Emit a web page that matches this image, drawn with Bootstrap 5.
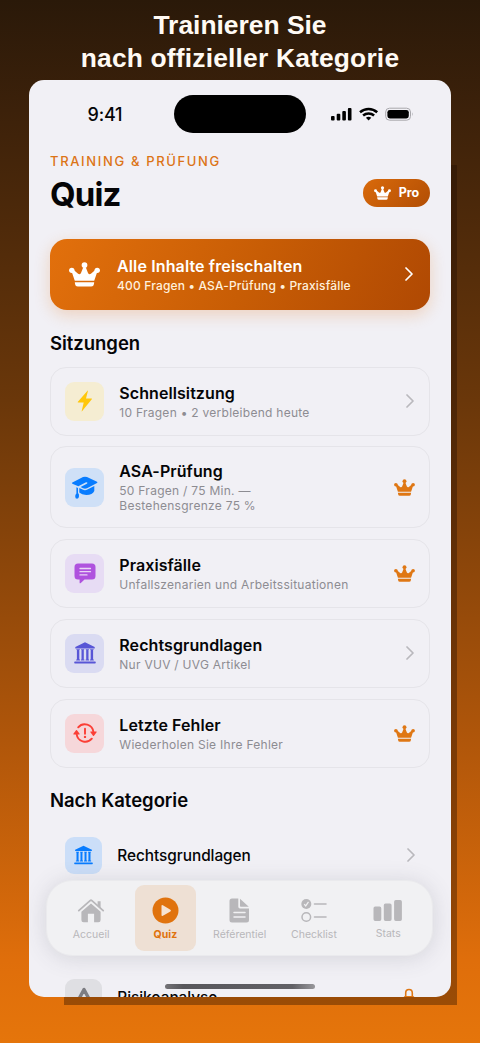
<!DOCTYPE html>
<html lang="de">
<head>
<meta charset="utf-8">
<meta name="viewport" content="width=device-width, initial-scale=1">
<title>Quiz</title>
<link href="https://cdn.jsdelivr.net/npm/bootstrap@5.3.0/dist/css/bootstrap.min.css" rel="stylesheet">
<style>
body{font-family:Inter,"Liberation Sans",sans-serif;height:1043px;overflow:hidden;color:#050507;background:linear-gradient(#2a1909 0,#3c210a 110px,#6a370a 400px,#b0560a 740px,#df6e0b 960px,#e5750b 1043px)}
.headline{font:700 26.4px/33px "Liberation Sans",Arial,sans-serif;height:80px;padding-top:9px;color:#fffaf4}
.headline span{letter-spacing:.18px}
.device{width:422px;height:917px;margin-left:29px}
.device::before{content:"";position:absolute;left:35px;right:-6px;top:85px;bottom:-8px;background:rgba(30,10,0,.37);filter:blur(.6px)}
.screen{height:917px;background:#f1f0f5;border-radius:15px;padding:0 21px}
.statusbar{height:68px}
.clock{font-size:18px;font-weight:500;letter-spacing:-.2px;width:124px;padding-left:37.500px}
.island{width:132px;height:38px;border-radius:19px;background:#000}
.eyebrow{font-size:13px;font-weight:500;line-height:16px;letter-spacing:1.65px;color:#dc7416;padding-top:5px}
.title{font-size:33px;font-weight:700;line-height:40px;letter-spacing:-.9px;padding-top:1px}
.pro{width:67px;height:28px;font-size:12.5px;font-weight:700;background:linear-gradient(135deg,#d96a0b,#b24e04);margin-bottom:7px}
.banner{height:71px;margin-top:24.500px;border-radius:17px;padding:0 17px 0 19px;background:linear-gradient(115deg,#e2700c,#c85d05 52%,#b04903);box-shadow:0 5px 16px rgba(226,112,20,.24)}
.banner-text{margin-left:17px;padding-top:2px}
.banner h2{font-size:16px;font-weight:600;line-height:20px;margin:0;letter-spacing:.13px}
.banner p{font-size:12px;line-height:19px;margin:0;color:#fff0dc;font-weight:500;letter-spacing:.17px}
.section-title{font-size:18.5px;font-weight:600;line-height:24px;margin:0;letter-spacing:-.03px}
.session{height:69px;border:1px solid #e5e4e9;border-radius:16px;padding:0 14px}
.session.tall{height:82px}
.session h3{font-size:16px;font-weight:600;line-height:20px;margin:0;letter-spacing:.08px}
.session p{font-size:12px;line-height:15px;margin:2px 0 0;color:#8d8c92;letter-spacing:.27px}
.tile{width:39px;height:39px;border-radius:9px;margin-right:15.300px}
.tile.compact{width:37px;height:37px}
.category{height:37px;padding:0 14px 0 15px;font-size:15.400px;font-weight:500;letter-spacing:-.05px}
.chev{margin-right:1px}
.tabs{left:17px;top:800px;width:387px;height:76px;border-radius:26px;background:#f1f1f3;border:1px solid #eaeaed;box-shadow:0 2px 22px rgba(70,70,90,.17);padding:4px 6px 4px 7px}
.tab{color:#b8b7ba;font-size:10.5px;line-height:14px;width:74.3px;height:66px;padding-top:11.500px;gap:4px}
.tab.active-tab{color:#e0730e;font-weight:700;background:#eee0d4;border-radius:9px;width:61px;margin:0 6.6px}
.indicator{left:136px;top:903.5px;width:150px;height:5.5px;border-radius:3px;background:linear-gradient(90deg,#747377,#58575c 12%,#626166 85%,#98979b)}
</style>
</head>
<body>
<svg width="0" height="0" class="position-absolute">
<symbol id="crown" viewBox="0 0 30 24"><g fill="currentColor"><circle cx="2.700" cy="8" r="2.600"/><circle cx="27.300" cy="8" r="2.600"/><circle cx="15" cy="2.900" r="2.800"/><path d="M5.600 18 2.700 9.500 4.600 7.700 8.800 11.200Q10.500 12.400 11.600 10.500L13.800 5H16.200L18.400 10.500Q19.500 12.400 21.200 11.200L25.400 7.700 27.300 9.500 24.400 18zM5.600 19.600h18.800l-.3 1.900q-.3 2.200-2.500 2.200H8.400q-2.200 0-2.500-2.200z"/></g></symbol>
<symbol id="chevron" viewBox="0 0 8 14"><path d="m1 1 6 6-6 6" fill="none" stroke="currentColor" stroke-width="1.7" stroke-linecap="round" stroke-linejoin="round"/></symbol>
<symbol id="court" viewBox="0 0 22 22"><path d="M11 .2 20.7 5v1.5H1.300V5zM2.400 7.300h3.400v.8h-.5v9.300h.7v1H2.200v-1h.7V8.100h-.5zm4.700 0h3.100v.8h-.4v9.300h.6v1H6.900v-1h.6V8.100h-.4zm4.700 0h3.100v.8h-.4v9.300h.6v1h-3.500v-1h.6V8.100h-.4zm4.400 0h3.400v.8h-.5v9.300h.7v1H16v-1h.7V8.100h-.5zM1 19.600h20q.8 0 .8 1T21 21.600H1q-.8 0-.8-1t.8-1z" fill="currentColor"/></symbol>
</svg>
<h1 class="headline text-center m-0">Trainieren Sie<br><span>nach offizieller Kategorie</span></h1>
<main class="device position-relative">
<div class="screen position-relative overflow-hidden">
  <div class="statusbar d-flex align-items-center">
    <div class="clock">9:41</div>
    <div class="island"></div>
    <svg class="ms-auto me-3" width="84" height="16" viewBox="0 0 84 16">
      <g fill="#000"><rect x="1" y="10" width="3.600" height="4.500" rx="1"/><rect x="6.700" y="7.700" width="3.600" height="6.800" rx="1"/><rect x="12.300" y="4.900" width="3.600" height="9.600" rx="1"/><rect x="17.900" y="2" width="3.600" height="12.500" rx="1"/></g>
      <g fill="none" stroke="#000" stroke-width="2.500"><path d="M30 6.200c5-4.400 12.200-4.400 17.200 0M33.100 9.500c3.200-2.800 7.800-2.800 11 0"/></g><path d="m38.600 14.600-2.700-2.800q2.700-2 5.400 0z"/>
      <rect x="55.700" y="2.200" width="24.800" height="12" rx="3.800" fill="none" stroke="#a8a7ac"/><rect x="57.400" y="3.900" width="21.400" height="8.600" rx="2.400"/><path d="M82 6.200q1.600 2 0 4z" fill="#a8a7ac"/>
    </svg>
  </div>
  <div class="d-flex justify-content-between align-items-end">
    <div><div class="eyebrow">TRAINING &amp; PRÜFUNG</div><div class="title mt-1">Quiz</div></div>
    <div class="pro rounded-pill text-white d-flex align-items-center justify-content-center gap-2"><svg width="17" height="14"><use href="#crown"/></svg>Pro</div>
  </div>
  <div class="banner text-white d-flex align-items-center">
    <svg width="31" height="25"><use href="#crown"/></svg>
    <div class="banner-text"><h2>Alle Inhalte freischalten</h2><p>400 Fragen • ASA-Prüfung • Praxisfälle</p></div>
    <svg class="ms-auto" width="8" height="14"><use href="#chevron"/></svg>
  </div>
  <h2 class="section-title" style="margin-top:21px">Sitzungen</h2>
  <div class="d-flex flex-column" style="gap:10.800px;margin-top:12px">
    <div class="session d-flex align-items-center"><div class="tile d-flex align-items-center justify-content-center" style="background:#f5edd2"><svg width="16" height="22" viewBox="0 0 16 22"><path d="M10.500.7q.7-.7.400.4L9 8.600h5.500q.8 0 .3.700L5.200 21.100q-.7.700-.5-.2L6.700 12.500H1.200q-.9 0-.3-.7z" fill="#ffc70b"/></svg></div><div><h3>Schnellsitzung</h3><p>10 Fragen • 2 verbleibend heute</p></div><svg class="chev ms-auto" style="color:#b9b8bd" width="8" height="14"><use href="#chevron"/></svg></div>
    <div class="session tall d-flex align-items-center"><div class="tile d-flex align-items-center justify-content-center" style="background:#cfe0f7"><svg width="27" height="24" viewBox="0 0 27 24" fill="#087cff"><path d="M1.400 7.600 12 2.100q2-.9 4 0L26 6.700q1 .7 0 1.300L16 13.200q-2 .9-4 0L9.600 12l6.300-3.200q1-.7.300-1.300-.6-.6-1.700-.1L7.300 11.200 1.400 8.800q-1-.6 0-1.200z"/><path d="m8.300 12.900 3.300 1.700q2.400 1.100 4.800 0l6.900-3.700v5q-1.800 4-8 4-4.600 0-7-2.400zM5.400 12.300l1.600.8v5q1.200.9 1 3.200-.1 2.400-1.900 2.500-2 0-1.900-2.500 0-1.900 1.200-2.900z"/></svg></div><div><h3>ASA-Prüfung</h3><p>50 Fragen / 75 Min. —<br>Bestehensgrenze 75 %</p></div><svg class="ms-auto" style="color:#df7714" width="21" height="17"><use href="#crown"/></svg></div>
    <div class="session d-flex align-items-center"><div class="tile d-flex align-items-center justify-content-center" style="background:#e7dcf4"><svg width="22" height="21" viewBox="0 0 22 21"><path d="M4 .5h14q3.500 0 3.500 3.500v9q0 3.500-3.500 3.500h-7.500L6.800 20q-1.200.9-1.200-.6v-2.900H4Q.5 16.500.5 13V4Q.5.500 4 .5" fill="#af52de"/><path d="M6 5.500h10.500M6 8.700h10.500M6 11.900h7" stroke="#e9d6f6" stroke-width="1.300" stroke-linecap="round"/></svg></div><div><h3>Praxisfälle</h3><p>Unfallszenarien und Arbeitssituationen</p></div><svg class="ms-auto" style="color:#df7714" width="21" height="17"><use href="#crown"/></svg></div>
    <div class="session d-flex align-items-center"><div class="tile d-flex align-items-center justify-content-center" style="background:#dadbf2"><svg style="color:#5856d6" width="22" height="22"><use href="#court"/></svg></div><div><h3>Rechtsgrundlagen</h3><p>Nur VUV / UVG Artikel</p></div><svg class="chev ms-auto" style="color:#b9b8bd" width="8" height="14"><use href="#chevron"/></svg></div>
    <div class="session d-flex align-items-center"><div class="tile d-flex align-items-center justify-content-center" style="background:#f6d7da"><svg width="24" height="22" viewBox="0 0 24 22"><path d="M5.200 5.300A8.700 8.700 0 0 1 20.400 10M18.800 16.700A8.700 8.700 0 0 1 3.600 12" fill="none" stroke="#fb3f36" stroke-width="1.900" stroke-linecap="round"/><path d="M17.700 9.600h5.600q.7 0 .3.600l-2.600 3.500q-.5.600-1 0l-2.600-3.500q-.4-.6.300-.6M.7 12.400h5.600q.7 0 .3-.6L4 8.300q-.5-.6-1 0L.4 11.800q-.4.600.3.600" fill="#fb3f36"/><path d="M12 6.700v5" stroke="#fb3f36" stroke-width="1.900" stroke-linecap="round"/><circle cx="12" cy="14.900" r="1.200" fill="#fb3f36"/></svg></div><div><h3>Letzte Fehler</h3><p>Wiederholen Sie Ihre Fehler</p></div><svg class="ms-auto" style="color:#df7714" width="21" height="17"><use href="#crown"/></svg></div>
  </div>
  <h2 class="section-title" style="margin-top:20px">Nach Kategorie</h2>
  <div class="d-flex flex-column" style="gap:105px;margin-top:25px">
    <div class="category d-flex align-items-center"><div class="tile compact d-flex align-items-center justify-content-center" style="background:#cbdef8"><svg style="color:#087cff" width="19" height="20"><use href="#court"/></svg></div>Rechtsgrundlagen<svg class="chev ms-auto" style="color:#b9b8bd" width="8" height="14"><use href="#chevron"/></svg></div>
    <div class="category d-flex align-items-center"><div class="tile compact d-flex align-items-center justify-content-center" style="background:#dfdfe3"><svg width="22" height="20" viewBox="0 0 22 20"><path d="m11 2.500-8 15h16z" fill="none" stroke="#7d7d82" stroke-width="3.400" stroke-linejoin="round"/></svg></div>Risikoanalyse<svg class="ms-auto" width="14" height="18" viewBox="0 0 14 18"><path d="M3.700 9V5q0-3.500 3.300-3.500T10.300 5v4" fill="none" stroke="#df7714" stroke-width="1.600"/><rect x="1.500" y="8" width="11" height="9" rx="2" fill="#df7714"/></svg></div>
  </div>
</div>
<nav class="tabs position-absolute d-flex">
  <div class="tab d-flex flex-column align-items-center"><svg width="28" height="27" viewBox="0 0 28 27"><path d="m1.800 13.600 11.300-10q.9-.7 1.800 0l11.300 10" fill="none" stroke="currentColor" stroke-width="1.800" stroke-linecap="round"/><path d="m14 6.400 9.600 8.400V23q0 2.200-2.200 2.200h-4.300v-8.500h-6.200v8.500H6.600q-2.200 0-2.200-2.200v-8.200zM20.600 4.200h3v7l-3-2.700z" fill="currentColor"/></svg>Accueil</div>
  <div class="tab active-tab d-flex flex-column align-items-center"><svg width="27" height="27" viewBox="0 0 27 27"><circle cx="13.500" cy="13.500" r="13" fill="#e0730e"/><path d="M9.500 9v9q0 1.500 1.400.8l7.500-4.400q1.100-.8 0-1.700l-7.500-4.400Q9.500 7.500 9.500 9" fill="#f6e3d3"/></svg>Quiz</div>
  <div class="tab d-flex flex-column align-items-center"><svg width="21" height="27" viewBox="0 0 21 27"><path d="M3 1.500h6.300v8.200q0 1.700 1.700 1.700h9V23q0 2.500-2.500 2.500H3Q.5 25.500.5 23V4Q.5 1.500 3 1.500M11 1.800l8.800 8H11.800q-.8 0-.8-.8z" fill="currentColor"/><path d="M5 15.500h11M5 20h11" stroke="#f1f1f3" stroke-width="1.500" stroke-linecap="round"/></svg>Référentiel</div>
  <div class="tab d-flex flex-column align-items-center"><svg width="26" height="27" viewBox="0 0 26 27"><circle cx="5.300" cy="7" r="5" fill="currentColor"/><path d="m3.200 7.100 1.500 1.800 2.800-4" fill="none" stroke="#f1f1f3" stroke-width="1.200"/><circle cx="5.300" cy="20" r="4.300" fill="none" stroke="currentColor" stroke-width="1.500"/><path d="M13.500 7H25M13.500 20H25" stroke="currentColor" stroke-width="1.600" stroke-linecap="round"/></svg>Checklist</div>
  <div class="tab d-flex flex-column align-items-center"><svg width="30" height="26" viewBox="0 0 30 26"><path d="M2.200 9.500h4.400q1.700 0 1.700 1.700v11.100q0 1.700-1.700 1.700H2.200Q.5 24 .5 22.300V11.200q0-1.700 1.700-1.700m10.300-3h4.400q1.700 0 1.700 1.700v14.100q0 1.700-1.700 1.700h-4.400q-1.700 0-1.700-1.700V8.200q0-1.700 1.700-1.700m10.300-3.500h4.400q1.700 0 1.700 1.700v17.600q0 1.700-1.700 1.700h-4.400q-1.700 0-1.700-1.700V4.700q0-1.700 1.700-1.700" fill="currentColor"/></svg>Stats</div>
</nav>
<div class="indicator position-absolute"></div>
</main>
<script src="https://cdn.jsdelivr.net/npm/bootstrap@5.3.0/dist/js/bootstrap.bundle.min.js"></script>
</body>
</html>
